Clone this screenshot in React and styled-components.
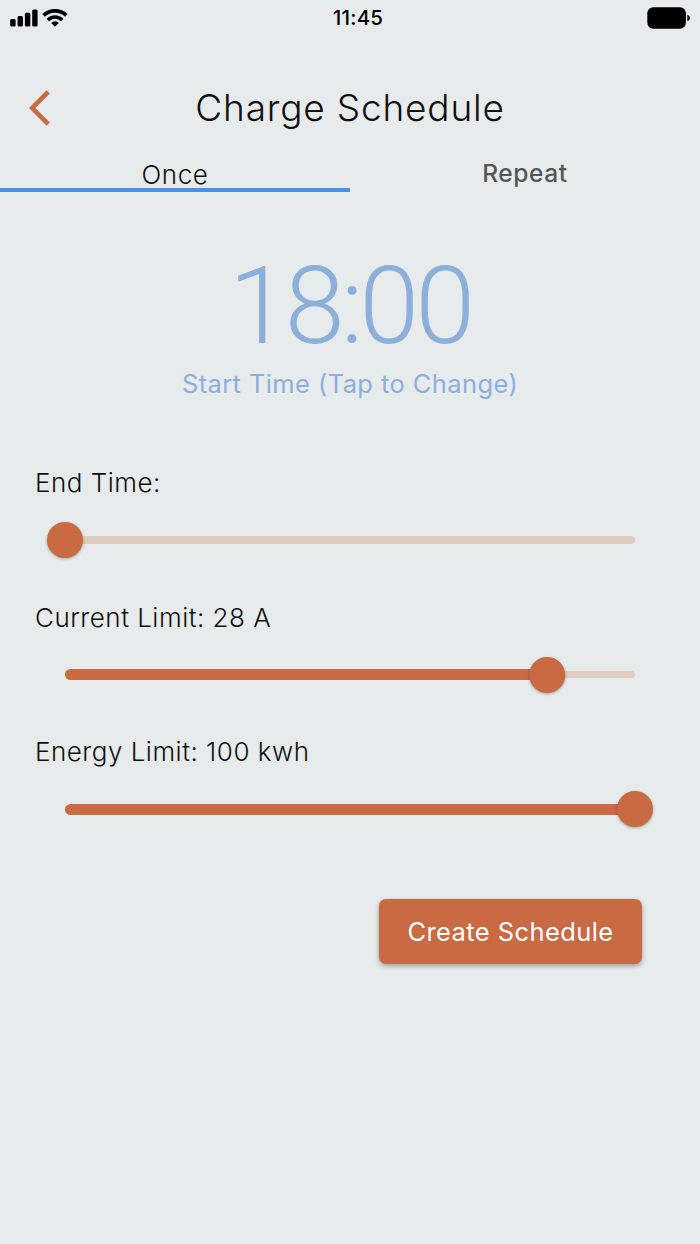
import React from 'react';
import styled, { createGlobalStyle } from 'styled-components';

const ORANGE = '#c96a42';
const BLUE = '#8cb0da';

const Global = createGlobalStyle`
  * { box-sizing: border-box; }
  body { margin: 0; background: #e7ebeb; }
`;

const Screen = styled.main`
  display: flex;
  flex-direction: column;
  width: 700px;
  height: 1244px;
  background: #e7ebeb;
  color: #111;
  font-family: Inter, 'Open Sans', sans-serif;
  font-weight: 300;
  overflow: hidden;
`;

const StatusBar = styled.header`
  display: grid;
  grid-template-columns: 1fr auto 1fr;
  align-items: center;
  height: 37px;
  padding: 0 9px 1px 10px;
`;

const Signals = styled.div`
  display: flex;
  align-items: center;
  gap: 4px;
  padding-bottom: 1px;
`;

const Clock = styled.time`
  padding-left: 15px;
  font-size: 20.5px;
  font-weight: 500;
  line-height: 36px;
  letter-spacing: 0.2px;
  color: #000;
`;

const BatterySlot = styled.div`
  display: flex;
  justify-content: flex-end;
`;

const TitleBar = styled.div`
  display: grid;
  grid-template-columns: 70px 1fr 70px;
  align-items: center;
  height: 116px;
  padding-top: 25px;
`;

const BackButton = styled.button`
  display: flex;
  justify-content: flex-start;
  padding: 0 0 0 29px;
  border: 0;
  background: none;
`;

const Title = styled.h1`
  margin: 0;
  text-align: center;
  font-size: 37px;
  font-weight: 300;
  line-height: 48px;
  letter-spacing: 0.8px;
  white-space: nowrap;
`;

const Tabs = styled.nav`
  display: grid;
  grid-template-columns: 1fr 1fr;
  height: 39px;
`;

const Tab = styled.button`
  display: flex;
  justify-content: center;
  align-items: flex-end;
  padding: 0 0 ${(p) => (p.$active ? 0 : 1)}px;
  border: 0;
  border-bottom: 4px solid ${(p) => (p.$active ? '#4a90e8' : 'transparent')};
  background: none;
  color: ${(p) => (p.$active ? '#111' : '#555')};
  font-family: inherit;
  font-size: ${(p) => (p.$active ? 26 : 24.5)}px;
  font-weight: ${(p) => (p.$active ? 300 : 500)};
  line-height: ${(p) => (p.$active ? 27 : 28)}px;
  letter-spacing: 0.6px;
`;

const TimePicker = styled.section`
  display: flex;
  flex-direction: column;
  align-items: center;
  padding-top: 51px;
  color: ${BLUE};
`;

const Time = styled.div`
  font-family: Roboto, sans-serif;
  font-size: 108px;
  font-weight: 300;
  line-height: 126px;
  letter-spacing: -4px;
`;

const TimeHint = styled.div`
  margin-top: -2px;
  font-size: 25.5px;
  font-weight: 400;
  line-height: 34px;
  letter-spacing: 0.4px;
`;

const Controls = styled.section`
  display: flex;
  flex-direction: column;
  gap: 34.5px;
  padding: 65px 65px 0 35px;
`;

const Control = styled.div`
  display: flex;
  flex-direction: column;
  height: 100px;
`;

const Label = styled.label`
  font-size: 26px;
  line-height: 34px;
  letter-spacing: 0.5px;
  white-space: nowrap;
`;

const Slider = styled.div`
  display: grid;
  align-items: center;
  height: 36px;
  margin: 22px 0 0 30px;
  & > * { grid-area: 1 / 1; }
`;

const Track = styled.div`
  height: 7.5px;
  border-radius: 4px;
  background: #dfcbc0;
`;

const Fill = styled.div`
  height: 11px;
  border-radius: 6px;
  background: ${ORANGE};
`;

const Thumb = styled.div`
  width: 36px;
  height: 36px;
  margin-left: -18px;
  border-radius: 50%;
  background: ${ORANGE};
  box-shadow: 0 1px 3px rgba(0, 0, 0, 0.3);
`;

const Actions = styled.footer`
  display: flex;
  justify-content: flex-end;
  padding: 63.5px 58px 0 0;
`;

const CreateButton = styled.button`
  width: 263px;
  height: 65px;
  padding: 1px 0 0;
  border: 0;
  border-radius: 7px;
  background: ${ORANGE};
  color: #fff;
  box-shadow: 0 2px 5px rgba(0, 0, 0, 0.33);
  font-family: inherit;
  font-size: 25.5px;
  font-weight: 400;
  letter-spacing: 0.4px;
  white-space: nowrap;
`;

const sliders = [
  { label: 'End Time:', position: 0 },
  { label: 'Current Limit: 28 A', position: 84.6 },
  { label: 'Energy Limit: 100 kwh', position: 100 },
];

function SignalBars() {
  return (
    <svg width="28" height="18" viewBox="0 0 28 18">
      <rect x="0.2" y="10" width="5.4" height="7.5" rx="1.5" />
      <rect x="7.6" y="7" width="5.4" height="10.5" rx="1.5" />
      <rect x="14.9" y="3.8" width="5.4" height="13.7" rx="1.5" />
      <rect x="22.2" y="0.5" width="5.4" height="17" rx="1.5" />
    </svg>
  );
}

function WifiIcon() {
  return (
    <svg width="26" height="18" viewBox="0 0 26 18" fill="none" stroke="#000">
      <path d="M1.6 6.4A16.5 16.5 0 0 1 24.4 6.4" strokeWidth="3.6" />
      <path d="M5.8 11A10 10 0 0 1 20.2 11" strokeWidth="3.4" />
      <path d="M9.2 14A5.8 5.8 0 0 1 16.8 14L13 17.8Z" fill="#000" stroke="none" />
    </svg>
  );
}

function BatteryIcon() {
  return (
    <svg width="44" height="22" viewBox="0 0 44 22">
      <rect x="0.3" y="0.2" width="38.6" height="21.6" rx="6" />
      <path d="M40.3 7.8Q43 8.6 43 11T40.3 14.2Z" />
    </svg>
  );
}

export default function App() {
  return (
    <Screen>
      <Global />
      <StatusBar>
        <Signals>
          <SignalBars />
          <WifiIcon />
        </Signals>
        <Clock>11:45</Clock>
        <BatterySlot><BatteryIcon /></BatterySlot>
      </StatusBar>
      <TitleBar>
        <BackButton aria-label="Back">
          <svg width="22" height="36" viewBox="0 0 22 36" fill="none" stroke={ORANGE} strokeWidth="4.6">
            <path d="M19.2 1.9L3.2 18L19.2 34.1" />
          </svg>
        </BackButton>
        <Title>Charge Schedule</Title>
      </TitleBar>
      <Tabs>
        <Tab $active>Once</Tab>
        <Tab>Repeat</Tab>
      </Tabs>
      <TimePicker>
        <Time>18:00</Time>
        <TimeHint>Start Time (Tap to Change)</TimeHint>
      </TimePicker>
      <Controls>
        {sliders.map(({ label, position }) => (
          <Control key={label}>
            <Label>{label}</Label>
            <Slider>
              <Track />
              {position > 0 && <Fill style={{ width: `${position}%` }} />}
              <Thumb style={{ transform: `translateX(${position * 5.7}px)` }} />
            </Slider>
          </Control>
        ))}
      </Controls>
      <Actions>
        <CreateButton>Create Schedule</CreateButton>
      </Actions>
    </Screen>
  );
}
